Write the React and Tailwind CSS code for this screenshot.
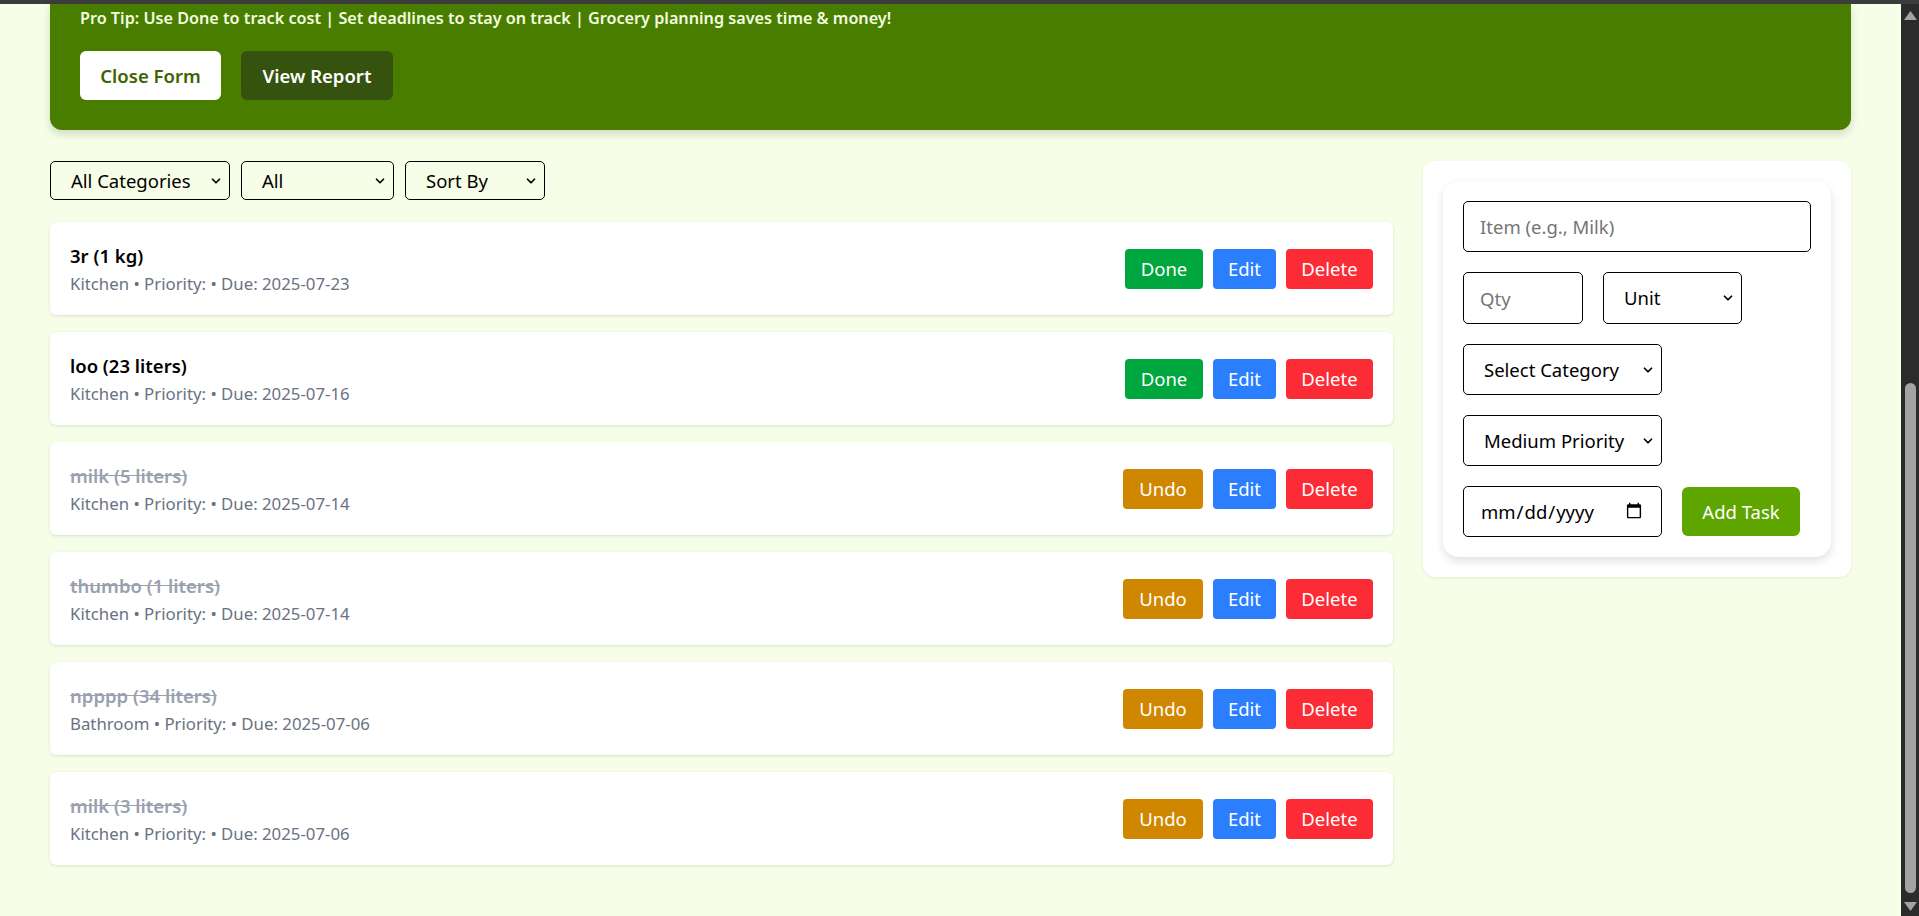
import { ChevronDown } from 'lucide-react'

const tasks = [
  { name: '3r (1 kg)', area: 'Kitchen', due: '2025-07-23', done: false },
  { name: 'loo (23 liters)', area: 'Kitchen', due: '2025-07-16', done: false },
  { name: 'milk (5 liters)', area: 'Kitchen', due: '2025-07-14', done: true },
  { name: 'thumbo (1 liters)', area: 'Kitchen', due: '2025-07-14', done: true },
  { name: 'npppp (34 liters)', area: 'Bathroom', due: '2025-07-06', done: true },
  { name: 'milk (3 liters)', area: 'Kitchen', due: '2025-07-06', done: true },
]

function Select({ label, className }) {
  return (
    <div className={`relative ${className}`}>
      <select className="w-full h-full appearance-none bg-transparent border border-black rounded-[5px] pl-[20px] pr-8 text-[18.5px] text-black outline-none">
        <option>{label}</option>
      </select>
      {/* native-looking chevron */}
      <ChevronDown size={14} strokeWidth={3} className="absolute right-[7px] top-1/2 -translate-y-1/2 pointer-events-none text-black" />
    </div>
  )
}

function TaskCard({ task }) {
  return (
    <div className="h-[93px] bg-white rounded-md shadow-[0_1px_3px_rgba(0,0,0,0.12)] px-5 flex items-center justify-between">
      <div className="pt-[2px]">
        <div className={`text-[18.5px] font-semibold leading-[28px] ${task.done ? 'line-through text-[#99a1af]' : 'text-black'}`}>
          {task.name}
        </div>
        <div className="text-[16.8px] leading-[28px] text-[#6a7282]">
          {task.area} • Priority: • Due: {task.due}
        </div>
      </div>
      <div className="flex gap-[10px]">
        {task.done ? (
          <button className="h-[40px] w-[80px] rounded-[4px] bg-[#d08700] text-white text-[18.5px]">Undo</button>
        ) : (
          <button className="h-[40px] w-[78px] rounded-[4px] bg-[#00a63e] text-white text-[18.5px]">Done</button>
        )}
        <button className="h-[40px] w-[63px] rounded-[4px] bg-[#2b7fff] text-white text-[18.5px]">Edit</button>
        <button className="h-[40px] w-[87px] rounded-[4px] bg-[#fb2c36] text-white text-[18.5px]">Delete</button>
      </div>
    </div>
  )
}

function Scrollbar() {
  return (
    <div className="w-[18px] shrink-0 bg-[#2b2b2b] flex flex-col items-center pt-[7px]">
      <svg width="13" height="9" viewBox="0 0 13 9"><path d="M6.5 0L13 9H0z" fill="#a3a3a3" /></svg>
      <div className="mt-[363px] w-[11px] h-[510px] rounded-full bg-[#a3a3a3]" />
      <svg width="13" height="9" viewBox="0 0 13 9" className="mt-[9px]"><path d="M0 0h13L6.5 9z" fill="#a3a3a3" /></svg>
    </div>
  )
}

export default function App() {
  return (
    <div className="h-screen overflow-hidden flex flex-col bg-[#f7fee7] font-['Noto_Sans',sans-serif]">
      <div className="h-[4px] shrink-0 bg-[#3c3c3c]" />
      <div className="flex flex-1 min-h-0">
        <main className="flex-1 px-[50px]">
          {/* Header (scrolled, top cut off) */}
          <section className="bg-[#497d00] rounded-b-xl shadow-[0_4px_8px_rgba(0,0,0,0.15)] px-[30px] pt-[2px] pb-[30px]">
            <p className="text-[16.2px] leading-6 font-semibold text-[#f3fde0]">
              Pro Tip: Use Done to track cost | Set deadlines to stay on track | Grocery planning saves time &amp; money!
            </p>
            <div className="mt-[21px] flex gap-5">
              <button className="h-[49px] w-[141px] rounded-md bg-white text-[#3d6300] text-[18.5px] font-semibold">Close Form</button>
              <button className="h-[49px] w-[152px] rounded-md bg-[#35530e] text-white text-[18.5px] font-semibold">View Report</button>
            </div>
          </section>

          <div className="mt-[31px] flex gap-[30px] items-start">
            {/* List column */}
            <div className="flex-1">
              <div className="flex gap-[11px]">
                <Select label="All Categories" className="w-[180px] h-[39px]" />
                <Select label="All" className="w-[153px] h-[39px]" />
                <Select label="Sort By" className="w-[140px] h-[39px]" />
              </div>
              <div className="mt-[22px] flex flex-col gap-[17px]">
                {tasks.map((t, i) => (
                  <TaskCard key={i} task={t} />
                ))}
              </div>
            </div>

            {/* Form column */}
            <aside className="w-[428px] shrink-0 bg-white rounded-xl shadow-[0_1px_3px_rgba(0,0,0,0.08)] p-5">
              <div className="bg-white rounded-2xl shadow-[0_4px_10px_rgba(0,0,0,0.12)] p-5 flex flex-col gap-5">
                <input
                  placeholder="Item (e.g., Milk)"
                  className="h-[51px] w-full border border-black rounded-[5px] px-4 text-[18.5px] outline-none placeholder:text-[#757575]"
                />
                <div className="flex gap-5">
                  <input
                    placeholder="Qty"
                    className="h-[52px] w-[120px] border border-black rounded-[5px] px-4 text-[18.5px] outline-none placeholder:text-[#757575]"
                  />
                  <Select label="Unit" className="w-[139px] h-[52px]" />
                </div>
                <Select label="Select Category" className="w-[199px] h-[51px]" />
                <Select label="Medium Priority" className="w-[199px] h-[51px]" />
                <div className="flex gap-5 items-center">
                  <input
                    type="date"
                    className="h-[51px] w-[199px] border border-black rounded-[5px] px-4 text-[18.5px] text-black outline-none"
                  />
                  <button className="h-[49px] w-[118px] rounded-md bg-[#5ea500] text-white text-[18.5px]">Add Task</button>
                </div>
              </div>
            </aside>
          </div>
        </main>
        <Scrollbar />
      </div>
    </div>
  )
}
